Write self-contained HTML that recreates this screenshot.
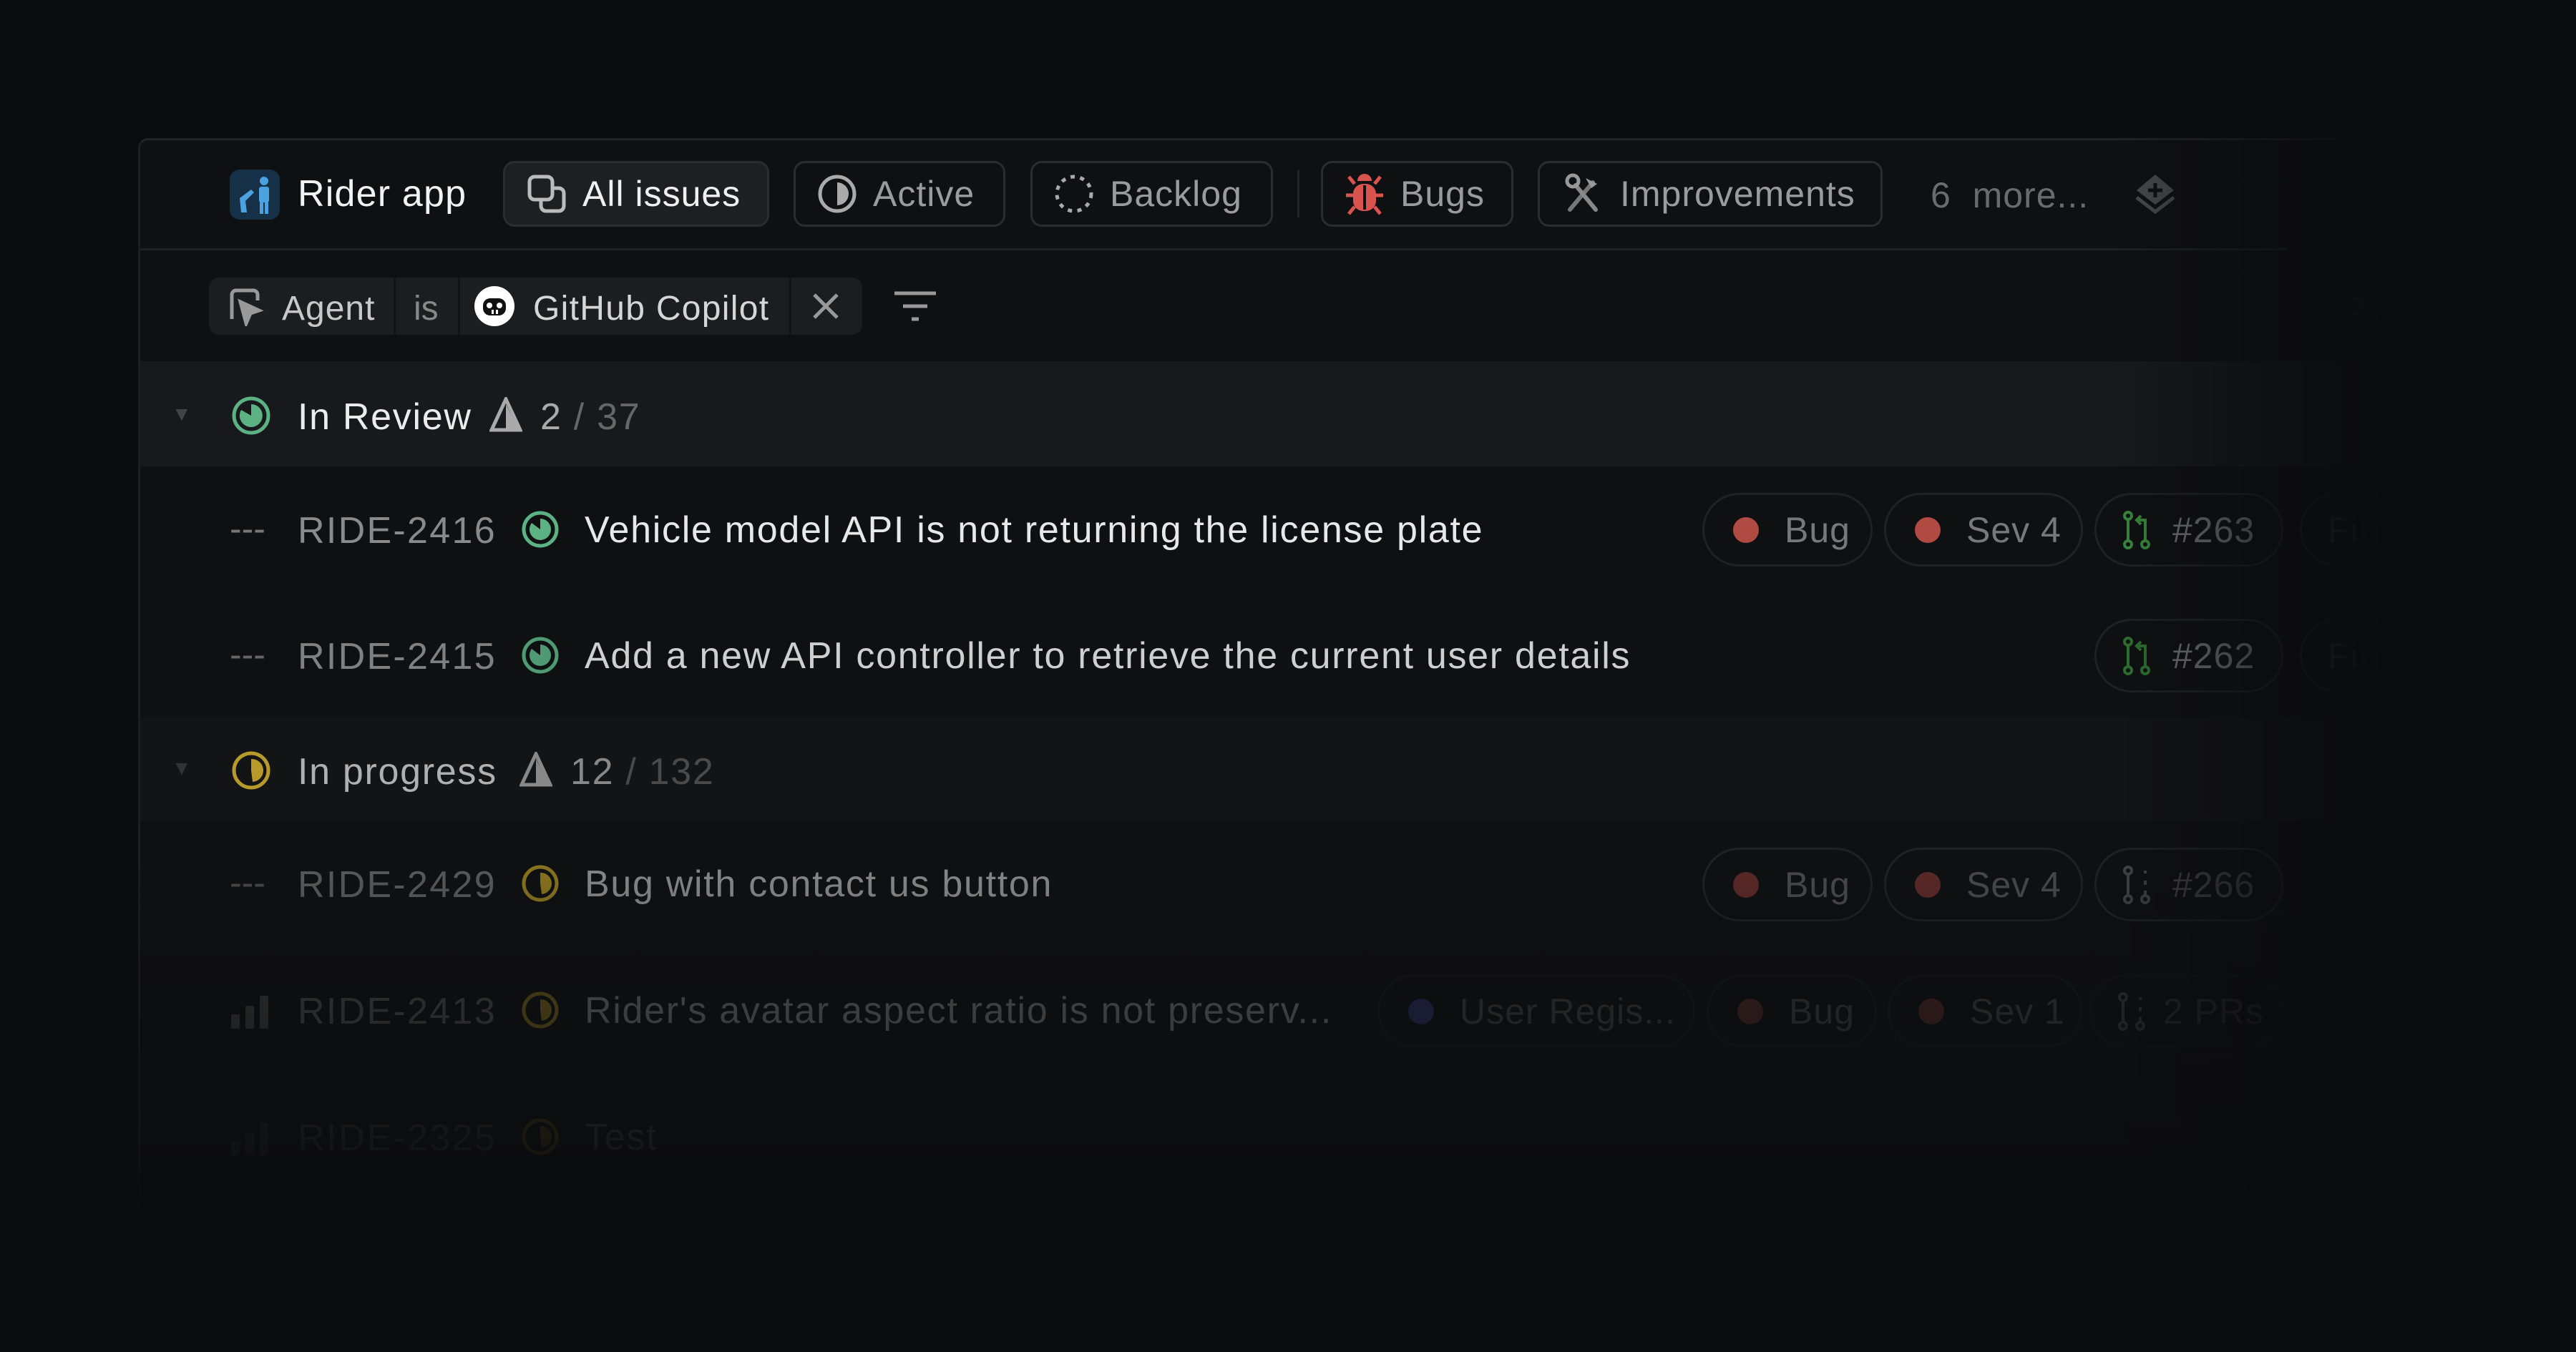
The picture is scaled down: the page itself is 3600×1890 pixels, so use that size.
<!DOCTYPE html>
<html><head><meta charset="utf-8"><style>
*{margin:0;padding:0;box-sizing:border-box}
body{width:3600px;height:1890px;background:#0a0b0d;font-family:"Liberation Sans",sans-serif;overflow:hidden;position:relative}
.a{position:absolute}
.panel{left:193px;top:193px;width:3407px;height:1500px;background:#0f1012;border-top:3px solid #222428;border-left:3px solid #1c1e21;border-top-left-radius:14px}
.chip{position:absolute;top:225px;height:92px;border:3px solid #2a2c30;border-radius:16px;display:flex;align-items:center;font-size:50px;color:#9a9b9e;letter-spacing:1px}
.chip svg{margin-left:30px;margin-right:22px}
.t{position:absolute;white-space:nowrap}
.ti{letter-spacing:1.7px}
.id{letter-spacing:2.3px}
.pill{position:absolute;height:103px;border:3px solid #1f2124;border-radius:52px;display:flex;align-items:center;font-size:50px;color:#77787b;letter-spacing:1px}
.dot{width:36px;height:36px;border-radius:50%;background:#b24a44;margin:0 36px 0 40px}
</style></head><body>
<div class="a panel"></div>
<!-- header -->
<svg class="a" style="left:321px;top:237px" width="70" height="70" viewBox="0 0 70 70"><rect width="70" height="70" rx="14" fill="#163048"/><circle cx="48" cy="16" r="6" fill="#4aa3e0"/><rect x="41" y="24" width="14" height="22" rx="3" fill="#4aa3e0"/><rect x="42" y="44" width="5" height="18" fill="#4aa3e0"/><rect x="49" y="44" width="5" height="18" fill="#4aa3e0"/><path d="M14 40 L30 28 L34 32 L22 44 L24 60 L16 60 Z" fill="#4aa3e0"/></svg>
<div class="t" style="left:416px;top:241px;font-size:52px;color:#f2f2f2;letter-spacing:1.2px">Rider app</div>
<div class="chip" style="left:703px;width:372px;background:#1d1f22;color:#f0f0f0"><svg width="56" height="56" viewBox="0 0 56 56" fill="none" stroke="#bbb" stroke-width="5"><rect x="4" y="4" width="32" height="32" rx="7"/><path d="M36 20h9a7 7 0 0 1 7 7v18a7 7 0 0 1-7 7H27a7 7 0 0 1-7-7v-9"/></svg>All issues</div>
<div class="chip" style="left:1109px;width:296px"><svg width="56" height="56" viewBox="0 0 56 56"><circle cx="28" cy="28" r="24" fill="none" stroke="#aaa" stroke-width="5"/><path d="M28 12a16 16 0 0 1 0 32z" fill="#aaa"/></svg>Active</div>
<div class="chip" style="left:1440px;width:339px"><svg width="56" height="56" viewBox="0 0 56 56"><circle cx="28" cy="28" r="24" fill="none" stroke="#aaa" stroke-width="5" stroke-dasharray="6 7.5"/></svg>Backlog</div>
<div class="a" style="left:1813px;top:238px;width:3px;height:66px;background:#222428"></div>
<div class="chip" style="left:1846px;width:269px"><svg width="56" height="60" viewBox="0 0 56 60" fill="#d9534f"><path d="M18 12a10 10 0 0 1 20 0z"/><rect x="12" y="16" width="32" height="38" rx="14"/><path d="M6 6l8 10M50 6l-8 10M2 32h12M42 32h12M6 58l8-10M50 58l-8-10" stroke="#d9534f" stroke-width="5"/><rect x="26" y="18" width="4" height="34" fill="#0f1012"/></svg>Bugs</div>
<div class="chip" style="left:2149px;width:482px"><svg width="60" height="60" viewBox="0 0 60 60" stroke-linecap="round"><path d="M12 52L44 14" stroke="#777" stroke-width="6"/><path d="M34 8l16 8-8 6" fill="#999"/><path d="M48 52L20 18" stroke="#888" stroke-width="6"/><circle cx="16" cy="12" r="8" fill="none" stroke="#999" stroke-width="5"/></svg>Improvements</div>
<div class="t" style="left:2698px;top:244px;font-size:50px;color:#6a6b6e;letter-spacing:1px">6&nbsp; more...</div>
<svg class="a" style="left:2982px;top:240px" width="60" height="60" viewBox="0 0 60 60"><path d="M30 4L56 26 30 46 4 26Z" fill="#4a4b4e"/><path d="M4 36l26 20 26-20" fill="none" stroke="#4a4b4e" stroke-width="5"/><path d="M30 16v20M20 26h20" stroke="#0f1012" stroke-width="5"/></svg>
<div class="a" style="left:196px;top:347px;width:3000px;height:3px;background:#1e2023"></div>
<!-- filter row -->
<div class="a" style="left:292px;top:388px;width:913px;height:80px;background:#1c1d20;border-radius:14px"></div>
<div class="a" style="left:550px;top:388px;width:3px;height:80px;background:#111214"></div>
<div class="a" style="left:640px;top:388px;width:3px;height:80px;background:#111214"></div>
<div class="a" style="left:1103px;top:388px;width:3px;height:80px;background:#111214"></div>
<svg class="a" style="left:316px;top:400px" width="54" height="56" viewBox="0 0 54 56" fill="none" stroke="#999" stroke-width="5"><path d="M8 46V12a6 6 0 0 1 6-6h24a6 6 0 0 1 6 6v8"/><path d="M20 22l26 12-12 4-6 14z" fill="#999"/></svg>
<div class="t" style="left:394px;top:404px;font-size:48px;color:#c8c8c8;letter-spacing:1px">Agent</div>
<div class="t" style="left:578px;top:404px;font-size:48px;color:#888">is</div>
<svg class="a" style="left:662px;top:399px" width="58" height="58" viewBox="0 0 58 58"><circle cx="29" cy="29" r="28" fill="#fff"/><rect x="13" y="18" width="32" height="24" rx="10" fill="#111"/><circle cx="22" cy="28" r="4" fill="#fff"/><circle cx="36" cy="28" r="4" fill="#fff"/><rect x="25" y="34" width="3" height="6" fill="#fff"/><rect x="31" y="34" width="3" height="6" fill="#fff"/></svg>
<div class="t" style="left:745px;top:404px;font-size:48px;color:#d6d6d6;letter-spacing:1.3px">GitHub Copilot</div>
<svg class="a" style="left:1134px;top:408px" width="40" height="40" viewBox="0 0 40 40" stroke="#999" stroke-width="5"><path d="M4 4l32 32M36 4L4 36"/></svg>
<svg class="a" style="left:1248px;top:404px" width="62" height="48" viewBox="0 0 62 48" stroke="#999" stroke-width="5"><path d="M2 6h58M14 24h34M26 42h10"/></svg>
<div class="a" style="left:3265px;top:388px;width:160px;height:84px;border-radius:16px;background:#121315"></div>
<svg class="a" style="left:3280px;top:398px" width="70" height="60" viewBox="0 0 70 60" stroke="#2a2b2e" stroke-width="5" fill="none"><path d="M2 20h56M2 40h56"/><circle cx="24" cy="20" r="6"/><circle cx="36" cy="40" r="6"/><circle cx="60" cy="8" r="6" fill="#22242a" stroke="none"/></svg>
<!-- groups -->
<div class="a" style="left:196px;top:505px;width:3100px;height:147px;background:#17191c"></div>
<div class="a" style="left:196px;top:1003px;width:3100px;height:145px;background:#131416"></div>
<div class="t" style="left:240px;top:563px;font-size:28px;color:#444">▼</div>
<svg class="a" style="left:323px;top:553px" width="56" height="56" viewBox="0 0 56 56"><circle cx="28" cy="28" r="24" fill="none" stroke="#5cb283" stroke-width="5"/><path d="M28 12a16 16 0 1 1-14 8L28 28z" fill="#5cb283"/></svg>
<div class="t ti" style="left:416px;top:553px;font-size:52px;color:#ececec">In Review</div>
<svg class="a" style="left:684px;top:555px" width="46" height="50" viewBox="0 0 46 50"><path d="M23 3L43 46H3Z" fill="none" stroke="#aaa" stroke-width="5"/><path d="M23 10L40 44H23Z" fill="#aaa"/></svg>
<div class="t ti" style="left:755px;top:553px;font-size:52px;color:#aaa">2 <span style="color:#666">/ 37</span></div>

<div class="t" style="left:240px;top:1058px;font-size:28px;color:#333">▼</div>
<svg class="a" style="left:323px;top:1049px" width="56" height="56" viewBox="0 0 56 56"><circle cx="28" cy="28" r="24" fill="none" stroke="#b89a2a" stroke-width="5"/><path d="M28 12a16 16 0 0 1 2 32L28 28z" fill="#b89a2a"/></svg>
<div class="t ti" style="left:416px;top:1049px;font-size:52px;color:#b0b0b0">In progress</div>
<svg class="a" style="left:726px;top:1051px" width="46" height="50" viewBox="0 0 46 50"><path d="M23 3L43 46H3Z" fill="none" stroke="#888" stroke-width="5"/><path d="M23 10L40 44H23Z" fill="#888"/></svg>
<div class="t ti" style="left:797px;top:1049px;font-size:52px;color:#888">12 <span style="color:#4a4a4a">/ 132</span></div>

<!-- rows -->
<div class="t" style="left:321px;top:710px;font-size:50px;color:#777">---</div>
<div class="t id" style="left:416px;top:712px;font-size:52px;color:#8a8a8a">RIDE-2416</div>
<svg class="a" style="left:727px;top:712px" width="56" height="56" viewBox="0 0 56 56"><circle cx="28" cy="28" r="23" fill="none" stroke="#5cb283" stroke-width="5"/><path d="M28 13a15 15 0 1 1-12 6L28 28z" fill="#5cb283"/></svg>
<div class="t ti" style="left:817px;top:711px;font-size:52px;color:#e8e8e8">Vehicle model API is not returning the license plate</div>
<div class="pill" style="left:2379px;top:689px;width:238px"><span class="dot"></span>Bug</div>
<div class="pill" style="left:2633px;top:689px;width:278px"><span class="dot"></span>Sev 4</div>
<div class="pill" style="left:2927px;top:689px;width:264px"><svg style="margin:0 30px 0 36px" width="40" height="56" viewBox="0 0 40 56" fill="none" stroke="#3a8a3e" stroke-width="4"><circle cx="8" cy="8" r="5"/><circle cx="8" cy="48" r="5"/><circle cx="32" cy="48" r="5"/><path d="M8 13v30M32 43V14h-10M26 8l-6 6 6 6"/></svg>#263</div>
<div class="pill" style="left:3214px;top:689px;width:260px;color:#3a3b3e;padding-left:36px">Finish</div>

<div class="t" style="left:321px;top:886px;font-size:50px;color:#666">---</div>
<div class="t id" style="left:416px;top:888px;font-size:52px;color:#808080">RIDE-2415</div>
<svg class="a" style="left:727px;top:888px" width="56" height="56" viewBox="0 0 56 56"><circle cx="28" cy="28" r="23" fill="none" stroke="#4f9a72" stroke-width="5"/><path d="M28 13a15 15 0 1 1-12 6L28 28z" fill="#4f9a72"/></svg>
<div class="t ti" style="left:817px;top:887px;font-size:52px;color:#cfcfcf">Add a new API controller to retrieve the current user details</div>
<div class="pill" style="left:2927px;top:865px;width:264px"><svg style="margin:0 30px 0 36px" width="40" height="56" viewBox="0 0 40 56" fill="none" stroke="#2f7232" stroke-width="4"><circle cx="8" cy="8" r="5"/><circle cx="8" cy="48" r="5"/><circle cx="32" cy="48" r="5"/><path d="M8 13v30M32 43V14h-10M26 8l-6 6 6 6"/></svg>#262</div>
<div class="pill" style="left:3214px;top:865px;width:260px;color:#3a3b3e;padding-left:36px">Finish</div>

<div class="t" style="left:321px;top:1205px;font-size:50px;color:#4a4a4a">---</div>
<div class="t id" style="left:416px;top:1207px;font-size:52px;color:#5a5a5a">RIDE-2429</div>
<svg class="a" style="left:727px;top:1207px" width="56" height="56" viewBox="0 0 56 56"><circle cx="28" cy="28" r="23" fill="none" stroke="#8a7420" stroke-width="5"/><path d="M28 13a15 15 0 0 1 2 30L28 28z" fill="#8a7420"/></svg>
<div class="t ti" style="left:817px;top:1206px;font-size:52px;color:#8a8a8a">Bug with contact us button</div>
<div class="pill" style="left:2379px;top:1185px;width:238px;color:#4a4a4c"><span class="dot" style="background:#5a2a28"></span>Bug</div>
<div class="pill" style="left:2633px;top:1185px;width:278px;color:#4a4a4c"><span class="dot" style="background:#5a2a28"></span>Sev 4</div>
<div class="pill" style="left:2927px;top:1185px;width:264px;color:#444"><svg style="margin:0 30px 0 36px" width="40" height="56" viewBox="0 0 40 56" fill="none" stroke="#444" stroke-width="4"><circle cx="8" cy="8" r="5"/><circle cx="8" cy="48" r="5"/><circle cx="32" cy="48" r="5"/><path d="M8 13v30M32 8v4M32 22v6M32 36v6"/></svg>#266</div>

<svg class="a" style="left:323px;top:1388px" width="56" height="50" viewBox="0 0 56 50" fill="#333"><rect x="0" y="30" width="12" height="20" rx="2"/><rect x="20" y="18" width="12" height="32" rx="2"/><rect x="40" y="4" width="12" height="46" rx="2"/></svg>
<div class="t id" style="left:416px;top:1384px;font-size:52px;color:#3e3e3e">RIDE-2413</div>
<svg class="a" style="left:727px;top:1384px" width="56" height="56" viewBox="0 0 56 56"><circle cx="28" cy="28" r="23" fill="none" stroke="#5e4f18" stroke-width="5"/><path d="M28 13a15 15 0 0 1 2 30L28 28z" fill="#5e4f18"/></svg>
<div class="t ti" style="left:817px;top:1383px;font-size:52px;color:#5c5c5c">Rider's avatar aspect ratio is not preserv...</div>
<div class="pill" style="left:1925px;top:1362px;width:444px;color:#333;border-color:#151618"><span class="dot" style="background:#23264a;margin-left:40px"></span>User Regis...</div>
<div class="pill" style="left:2385px;top:1362px;width:238px;color:#333;border-color:#151618"><span class="dot" style="background:#3e2220"></span>Bug</div>
<div class="pill" style="left:2638px;top:1362px;width:272px;color:#333;border-color:#151618"><span class="dot" style="background:#3e2220"></span>Sev 1</div>
<div class="pill" style="left:2920px;top:1362px;width:270px;color:#2e2e2e;border-color:#131416"><svg style="margin:0 24px 0 36px" width="40" height="56" viewBox="0 0 40 56" fill="none" stroke="#333" stroke-width="4"><circle cx="8" cy="8" r="5"/><circle cx="8" cy="48" r="5"/><circle cx="32" cy="48" r="5"/><path d="M8 13v30M32 8v4M32 22v6M32 36v6"/></svg>2 PRs</div>

<svg class="a" style="left:323px;top:1565px" width="56" height="50" viewBox="0 0 56 50" fill="#1e1e1e"><rect x="0" y="30" width="12" height="20" rx="2"/><rect x="20" y="18" width="12" height="32" rx="2"/><rect x="40" y="4" width="12" height="46" rx="2"/></svg>
<div class="t id" style="left:416px;top:1561px;font-size:52px;color:#262626">RIDE-2325</div>
<svg class="a" style="left:727px;top:1561px" width="56" height="56" viewBox="0 0 56 56"><circle cx="28" cy="28" r="23" fill="none" stroke="#332c10" stroke-width="5"/><path d="M28 13a15 15 0 0 1 2 30L28 28z" fill="#332c10"/></svg>
<div class="t ti" style="left:817px;top:1560px;font-size:52px;color:#2e2e2e">Test</div>

<!-- fades -->
<div class="a" style="left:0;top:0;width:3600px;height:1890px;background:linear-gradient(to right,rgba(10,11,13,0) 0,rgba(10,11,13,0) 2950px,rgba(10,11,13,.7) 3200px,#0a0b0d 3330px)"></div>
<div class="a" style="left:0;top:0;width:3600px;height:1890px;background:linear-gradient(to bottom,rgba(10,11,13,0) 1200px,rgba(10,11,13,.3) 1350px,rgba(10,11,13,.6) 1580px,#0a0b0d 1700px)"></div>
</body></html>
